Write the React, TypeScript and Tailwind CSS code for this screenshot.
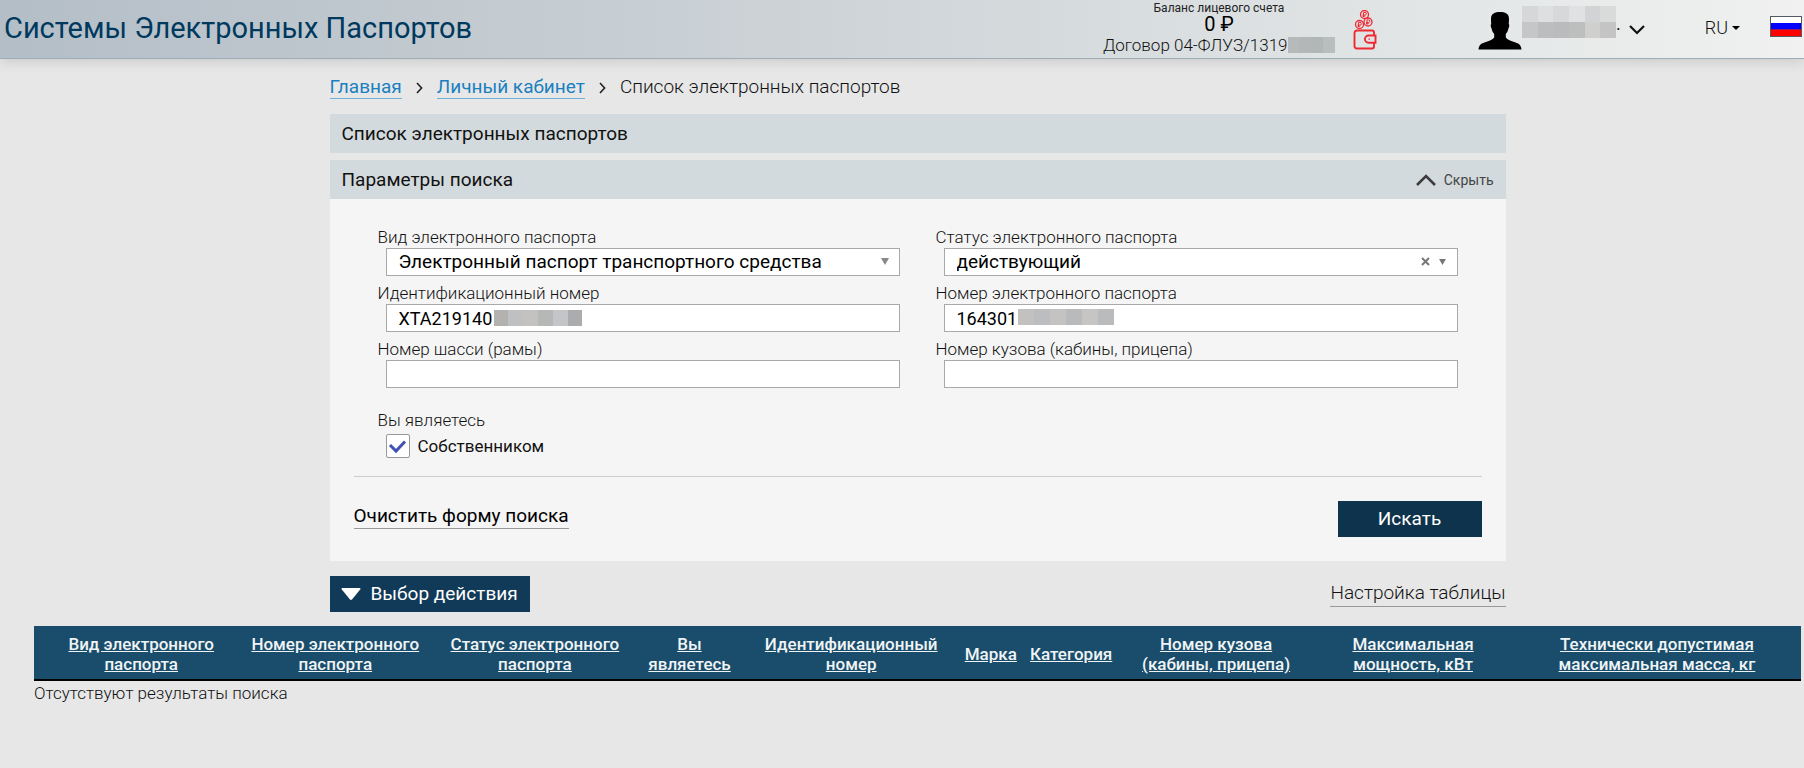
import type { ReactNode } from "react";

const columns = [
  { width: "w-[11.4%]", lines: ["Вид электронного", "паспорта"], pad: "pl-[13px]" },
  { width: "w-[11.3%]", lines: ["Номер электронного", "паспорта"], pad: "" },
  { width: "w-[11.3%]", lines: ["Статус электронного", "паспорта"], pad: "" },
  { width: "w-[6.2%]", lines: ["Вы", "являетесь"], pad: "" },
  { width: "w-[12.1%]", lines: ["Идентификационный", "номер"], pad: "" },
  { width: "w-[3.7%]", lines: ["Марка"], pad: "" },
  { width: "w-[5.4%]", lines: ["Категория"], pad: "" },
  { width: "w-[11%]", lines: ["Номер кузова", "(кабины, прицепа)"], pad: "" },
  { width: "w-[11.3%]", lines: ["Максимальная", "мощность, кВт"], pad: "" },
  { width: "w-[16.3%]", lines: ["Технически допустимая", "максимальная масса, кг"], pad: "" },
];

const control =
  "block h-7 w-full appearance-none rounded-none border border-[#a9a9a9] bg-white px-3 leading-6 text-black outline-none";

function Field({ id, label, children }: { id: string; label: string; children: ReactNode }) {
  return (
    <div>
      <label htmlFor={id} className="block text-[17px] leading-[22px] font-light whitespace-nowrap">
        {label}
      </label>
      <div className="relative pl-2">{children}</div>
    </div>
  );
}

function Mask({ colors, className }: { colors: string[]; className: string }) {
  return (
    <span aria-hidden="true" className={`flex h-4 ${className}`}>
      {colors.map((c, i) => (
        <span key={i} className={`flex-1 ${c}`} />
      ))}
    </span>
  );
}

function Down({ className }: { className: string }) {
  return (
    <svg viewBox="0 0 8 7" className={className} fill="currentColor" aria-hidden="true">
      <path d="M0 0h8L4 7z" />
    </svg>
  );
}

function Chevron() {
  return (
    <svg viewBox="0 0 7 12" className="h-3 w-[7px]" fill="none" stroke="#222" strokeWidth="1.6" aria-hidden="true">
      <path d="M1 1l4.6 5L1 11" />
    </svg>
  );
}

function Coin({ x, y }: { x: number; y: number }) {
  return (
    <g transform={`translate(${x} ${y})`}>
      <circle r="4" strokeWidth="1.3" />
      <path d="M-1 2.6V-2.1H.5a1.3 1.3 0 0 1 0 2.7H-2M-2 1.7H.8" strokeWidth="1" />
    </g>
  );
}

function Wallet() {
  return (
    <svg viewBox="0 0 24 40" className="h-10 w-6" fill="none" stroke="#ee2a33" aria-hidden="true">
      <Coin x={11.5} y={4.5} />
      <Coin x={6.5} y={14.5} />
      <Coin x={15} y={12} />
      <path
        d="M21 25v-2.5a2 2 0 0 0-2-2H4a2.500 2.500 0 0 0-2.500 2.500v13A2.500 2.500 0 0 0 4 38.500h15a2 2 0 0 0 2-2V33"
        strokeWidth="1.9"
      />
      <path d="M22.500 25.500h-7a3.600 3.600 0 0 0 0 7.200h7z" strokeWidth="1.9" />
      <path d="M15.500 29.100h1.500" strokeWidth="1.2" />
    </svg>
  );
}

function Header() {
  return (
    <header className="relative flex h-[59px] items-start justify-between border-b border-[#9dadb7] bg-linear-to-r from-[#b4bec7] via-[#d0d6d9] via-50% to-[#f0f1f0] shadow-[0_3px_12px_rgba(0,0,0,0.12)]">
      <div className="pt-2.5 pl-1 text-[29px] leading-9 whitespace-nowrap text-[#00395e]">
        Системы Электронных Паспортов
      </div>
      <div className="flex items-start">
        <div className="mr-[18px] w-[232px]">
          <div className="text-center text-xs leading-4 text-[#222]">Баланс лицевого счета</div>
          <div className="text-center text-xl leading-[17px] text-black">0 ₽</div>
          <div className="flex items-center text-[17px] leading-6 font-light whitespace-nowrap">
            Договор 04-ФЛУЗ/1319
            <Mask colors={["bg-[#b6babb]", "bg-[#b3b7b8]", "bg-[#b1b6b7]", "bg-[#b8bdbd]"]} className="min-w-0 flex-1" />
          </div>
        </div>
        <a href="#balance" aria-label="Пополнить баланс" className="mt-2.5 mr-[101px]">
          <Wallet />
        </a>
        <button type="button" className="mt-1.5 flex items-start" aria-label="Профиль">
          <svg viewBox="0 0 44 38" className="mt-1.5 h-[38px] w-11" fill="#000" aria-hidden="true">
            <path d="M22 0c5 0 9 1.500 9 7 0 2-.2 4-.2 5 .8.500.6 3-.4 4.500-.5 3-1.700 4.300-2.600 5.500v3.500c1.500 2.500 5.200 3.500 9 4.800 4 1.300 6.200 2.500 6.700 7.200H.5c.5-4.700 2.700-5.900 6.700-7.200 3.800-1.300 7.500-2.300 9-4.800V22c-.9-1.200-2.100-2.500-2.600-5.500-1-1.500-1.200-4-.4-4.500 0-1-.2-3-.2-5 0-5.500 4-7 9-7z" />
          </svg>
          <span aria-hidden="true" className="block w-[94px]">
            <Mask colors={["bg-[#d5d7d9]", "bg-[#dddfe1]", "bg-[#d7d8da]", "bg-[#dfe1e2]", "bg-[#d1d3d4]", "bg-[#d9dbda]"]} className="" />
            <Mask colors={["bg-[#c5c6c8]", "bg-[#bcbdbe]", "bg-[#babbbc]", "bg-[#bdbebe]", "bg-[#cfd0ce]", "bg-[#c3c4c3]"]} className="" />
          </span>
          <span className="pt-1.5 text-lg leading-6">.</span>
          <svg viewBox="0 0 16 10" className="mt-[19px] ml-2 h-2.5 w-4" fill="none" stroke="#111" strokeWidth="2.2" aria-hidden="true">
            <path d="M1 1l7 7 7-7" />
          </svg>
        </button>
        <button type="button" className="mt-4 ml-[60px] flex items-center gap-1 text-lg leading-6 font-light">
          RU
          <svg viewBox="0 0 8 4" className="h-1 w-2" aria-hidden="true">
            <path d="M0 0h8L4 4z" />
          </svg>
        </button>
        <svg viewBox="0 0 32 21" className="mt-4 mr-0.5 ml-[30px] h-[21px] w-8" aria-hidden="true">
          <path d="M0 0h32v21H0z" fill="#555a60" />
          <path d="M1 1h30v6H1z" fill="#fff" />
          <path d="M1 7h30v6.500H1z" fill="#0000ff" />
          <path d="M1 13.500h30V20H1z" fill="#ff0000" />
        </svg>
      </div>
    </header>
  );
}

export default function App() {
  return (
    <div className="min-h-screen bg-[#e7e7e7] font-[Roboto,'Liberation_Sans',sans-serif] text-[#111]">
      <Header />
      <main className="pr-[3px] pl-[34px]">
        <div className="mx-auto max-w-[1176px]">
          <nav className="flex items-center gap-3.5 pt-[17px] pb-[15px] text-[19px] leading-[22px]">
            <a href="#home" className="border-b border-[#6fb0d9] text-[#1a80bf]">Главная</a>
            <Chevron />
            <a href="#cabinet" className="border-b border-[#6fb0d9] text-[#1a80bf]">Личный кабинет</a>
            <Chevron />
            <span className="border-b border-transparent font-light">Список электронных паспортов</span>
          </nav>

          <h1 className="bg-[#d3dadd] px-3 py-1.5 text-[19px] leading-[27px]">Список электронных паспортов</h1>

          <section className="mt-[7px]">
            <div className="flex items-center justify-between bg-[#d3dadd] px-3 py-1.5">
              <h2 className="text-[19px] leading-[27px]">Параметры поиска</h2>
              <button type="button" className="flex items-center gap-2 text-sm text-[#444]">
                <svg viewBox="0 0 20 12" className="h-3 w-5" fill="none" stroke="#3c3c3c" strokeWidth="2.600" aria-hidden="true">
                  <path d="M1 11l9-9 9 9" />
                </svg>
                Скрыть
              </button>
            </div>

            <form className="bg-[#f5f5f5] px-6 pt-[27px] pb-6" onSubmit={(e) => e.preventDefault()}>
              <div className="px-6">
                <div className="grid grid-cols-2 gap-x-9 gap-y-1.5">
                  <Field id="kind" label="Вид электронного паспорта">
                    <select id="kind" className={`${control} text-[19px]`}>
                      <option>Электронный паспорт транспортного средства</option>
                    </select>
                    <Down className="pointer-events-none absolute top-2.5 right-[11px] h-[7px] w-2 text-[#888]" />
                  </Field>
                  <Field id="status" label="Статус электронного паспорта">
                    <select id="status" className={`${control} text-[19px]`}>
                      <option>действующий</option>
                    </select>
                    <button type="button" aria-label="Сбросить статус" className="absolute top-[9px] right-7 text-[#777]">
                      <svg viewBox="0 0 9 9" className="size-[9px]" fill="none" stroke="currentColor" strokeWidth="2">
                        <path d="M1 1l7 7M8 1L1 8" />
                      </svg>
                    </button>
                    <Down className="pointer-events-none absolute top-[11px] right-3 h-1.5 w-[7px] text-[#777]" />
                  </Field>
                  <Field id="vin" label="Идентификационный номер">
                    <input id="vin" type="text" defaultValue="XTA219140" className={`${control} text-lg`} />
                    <Mask
                      colors={["bg-[#b3b2af]", "bg-[#bfc0c2]", "bg-[#c4c2c0]", "bg-[#b6b8b7]", "bg-[#c3c5c8]", "bg-[#abacae]"]}
                      className="pointer-events-none absolute top-1.5 left-[116px] w-[89px]"
                    />
                  </Field>
                  <Field id="number" label="Номер электронного паспорта">
                    <input id="number" type="text" defaultValue="164301" className={`${control} text-lg`} />
                    <Mask
                      colors={["bg-[#c2c1c0]", "bg-[#bbbdc0]", "bg-[#c5c3c1]", "bg-[#b8babb]", "bg-[#c7c4c4]", "bg-[#b9bbbc]"]}
                      className="pointer-events-none absolute top-[5px] left-[82px] w-24"
                    />
                  </Field>
                  <Field id="chassis" label="Номер шасси (рамы)">
                    <input id="chassis" type="text" className={`${control} text-lg`} />
                  </Field>
                  <Field id="body" label="Номер кузова (кабины, прицепа)">
                    <input id="body" type="text" className={`${control} text-lg`} />
                  </Field>
                </div>

                <fieldset className="mt-[21px]">
                  <legend className="text-[17px] leading-[22px] font-light">Вы являетесь</legend>
                  <label className="mt-[3px] flex items-center gap-2 pl-2 text-[17px] leading-6">
                    <span className="relative size-6">
                      <input
                        type="checkbox"
                        defaultChecked
                        className="peer block size-6 appearance-none rounded-xs border border-[#999] bg-white"
                      />
                      <svg
                        viewBox="0 0 24 24"
                        className="pointer-events-none absolute inset-0 hidden size-6 peer-checked:block"
                        fill="none"
                        stroke="#3f51b5"
                        strokeWidth="3"
                        aria-hidden="true"
                      >
                        <path d="M4 11l6 6 9-9.500" />
                      </svg>
                    </span>
                    Собственником
                  </label>
                </fieldset>
              </div>

              <div className="mt-[18px] flex items-start justify-between border-t border-[#ccc] pt-6">
                <button type="reset" className="mt-0.5 border-b border-[#999] text-[19px] leading-[25px] text-black">
                  Очистить форму поиска
                </button>
                <button type="submit" className="h-9 w-36 bg-[#0e334c] text-[19px] leading-6 text-white">
                  Искать
                </button>
              </div>
            </form>
          </section>

          <div className="mt-[15px] flex items-start justify-between">
            <button type="button" className="flex h-9 items-center gap-2.5 bg-[#113a58] pr-3 pl-[11px] text-[19px] leading-6 text-white">
              <svg viewBox="0 0 20 12" className="h-3 w-5" fill="#fff" aria-hidden="true">
                <path d="M1 0h18l.6 1L11 11.500q-1 .8-2 0L.4 1z" />
              </svg>
              Выбор действия
            </button>
            <a href="#columns" className="mt-1 border-b border-[#999] text-[19px] leading-[26px] font-light">
              Настройка таблицы
            </a>
          </div>
        </div>

        <table className="mt-3.5 w-full table-fixed border-collapse">
          <thead>
            <tr className="border-b-2 border-black bg-[#1a4d6b]">
              {columns.map((c) => (
                <th key={c.lines[0]} scope="col" className={`${c.width} ${c.pad} pt-2 pb-[5px] text-[17px] leading-5 font-medium whitespace-nowrap`}>
                  <a href="#sort" className="text-[#f0f4f6] underline">
                    {c.lines[0]}
                    {c.lines[1] && <br />}
                    {c.lines[1]}
                  </a>
                </th>
              ))}
            </tr>
          </thead>
          <tbody>
            <tr>
              <td colSpan={10} className="text-[17px] leading-6 font-light">
                Отсутствуют результаты поиска
              </td>
            </tr>
          </tbody>
        </table>
      </main>
    </div>
  );
}
